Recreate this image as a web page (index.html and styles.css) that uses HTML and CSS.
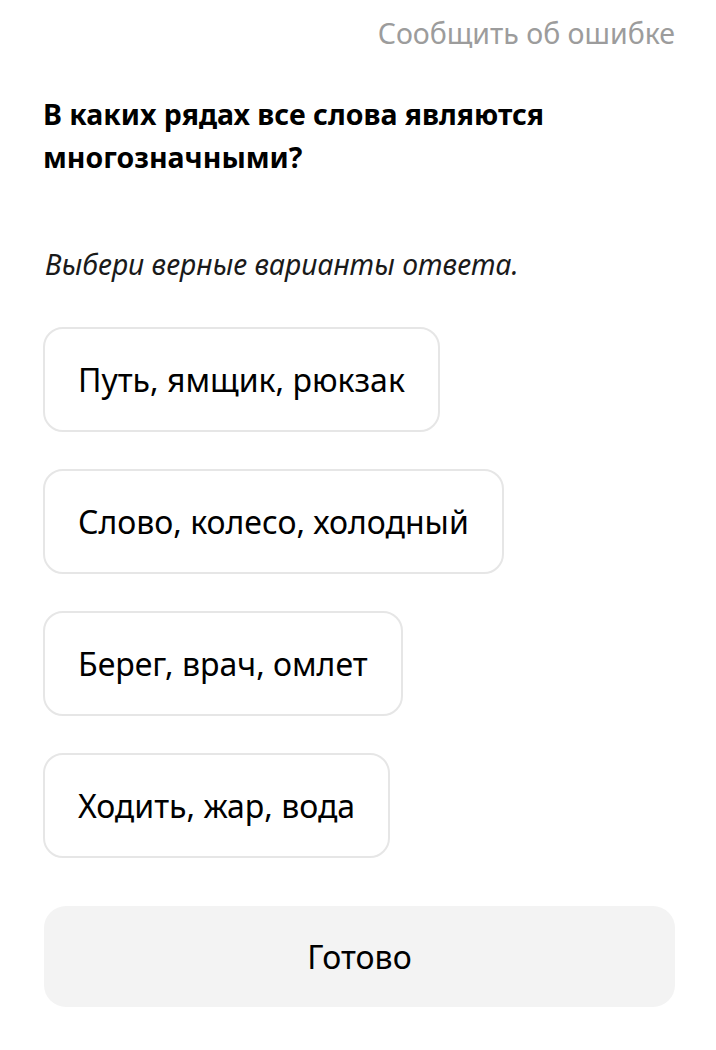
FILE: index.html
```html
<!DOCTYPE html>
<html lang="ru">
<head>
    <meta charset="UTF-8">
    <meta name="viewport" content="width=device-width, initial-scale=1.0">
    <title>Задание</title>
    <link rel="stylesheet" href="styles.css">
</head>
<body>
    <div class="page">
        <div class="report">
            <a href="#">Сообщить об ошибке</a>
        </div>
        <h1 class="question">В каких рядах все слова являются многозначными?</h1>
        <p class="hint">Выбери верные варианты ответа.</p>
        <div class="options">
            <div class="option">Путь, ямщик, рюкзак</div>
            <div class="option">Слово, колесо, холодный</div>
            <div class="option">Берег, врач, омлет</div>
            <div class="option">Ходить, жар, вода</div>
        </div>
        <button class="done">Готово</button>
    </div>
</body>
</html>
```

FILE: styles.css
```css
body {
    margin: 0;
    padding: 0;
    background: #fff;
    font-family: "Noto Sans", Roboto, sans-serif;
    color: #000;
}
.page {
    padding: 0 41px 0 43px;
}
.report {
    display: flex;
    justify-content: flex-end;
    padding-top: 13px;
}
.report a {
    color: #9c9c9c;
    font-size: 28.5px;
    line-height: 40px;
    text-decoration: none;
}
.question {
    margin: 40px 0 0 0;
    font-size: 28.5px;
    font-weight: 700;
    line-height: 43px;
    width: 560px;
}
.hint {
    margin: 65px 0 0 2px;
    font-size: 28.3px;
    font-style: italic;
    line-height: 40px;
    color: #1a1a1a;
}
.options {
    display: flex;
    flex-direction: column;
    align-items: flex-start;
    gap: 37px;
    margin-top: 43px;
}
.option {
    box-sizing: border-box;
    height: 105px;
    display: flex;
    align-items: center;
    padding: 0 33px;
    border: 2px solid #e6e6e6;
    border-radius: 20px;
    font-size: 32px;
}
.done {
    display: block;
    box-sizing: border-box;
    width: 631px;
    height: 101px;
    margin: 48px 0 0 1px;
    border: none;
    border-radius: 22px;
    background: #f3f3f3;
    font-family: inherit;
    font-size: 32px;
    color: #000;
}
```
